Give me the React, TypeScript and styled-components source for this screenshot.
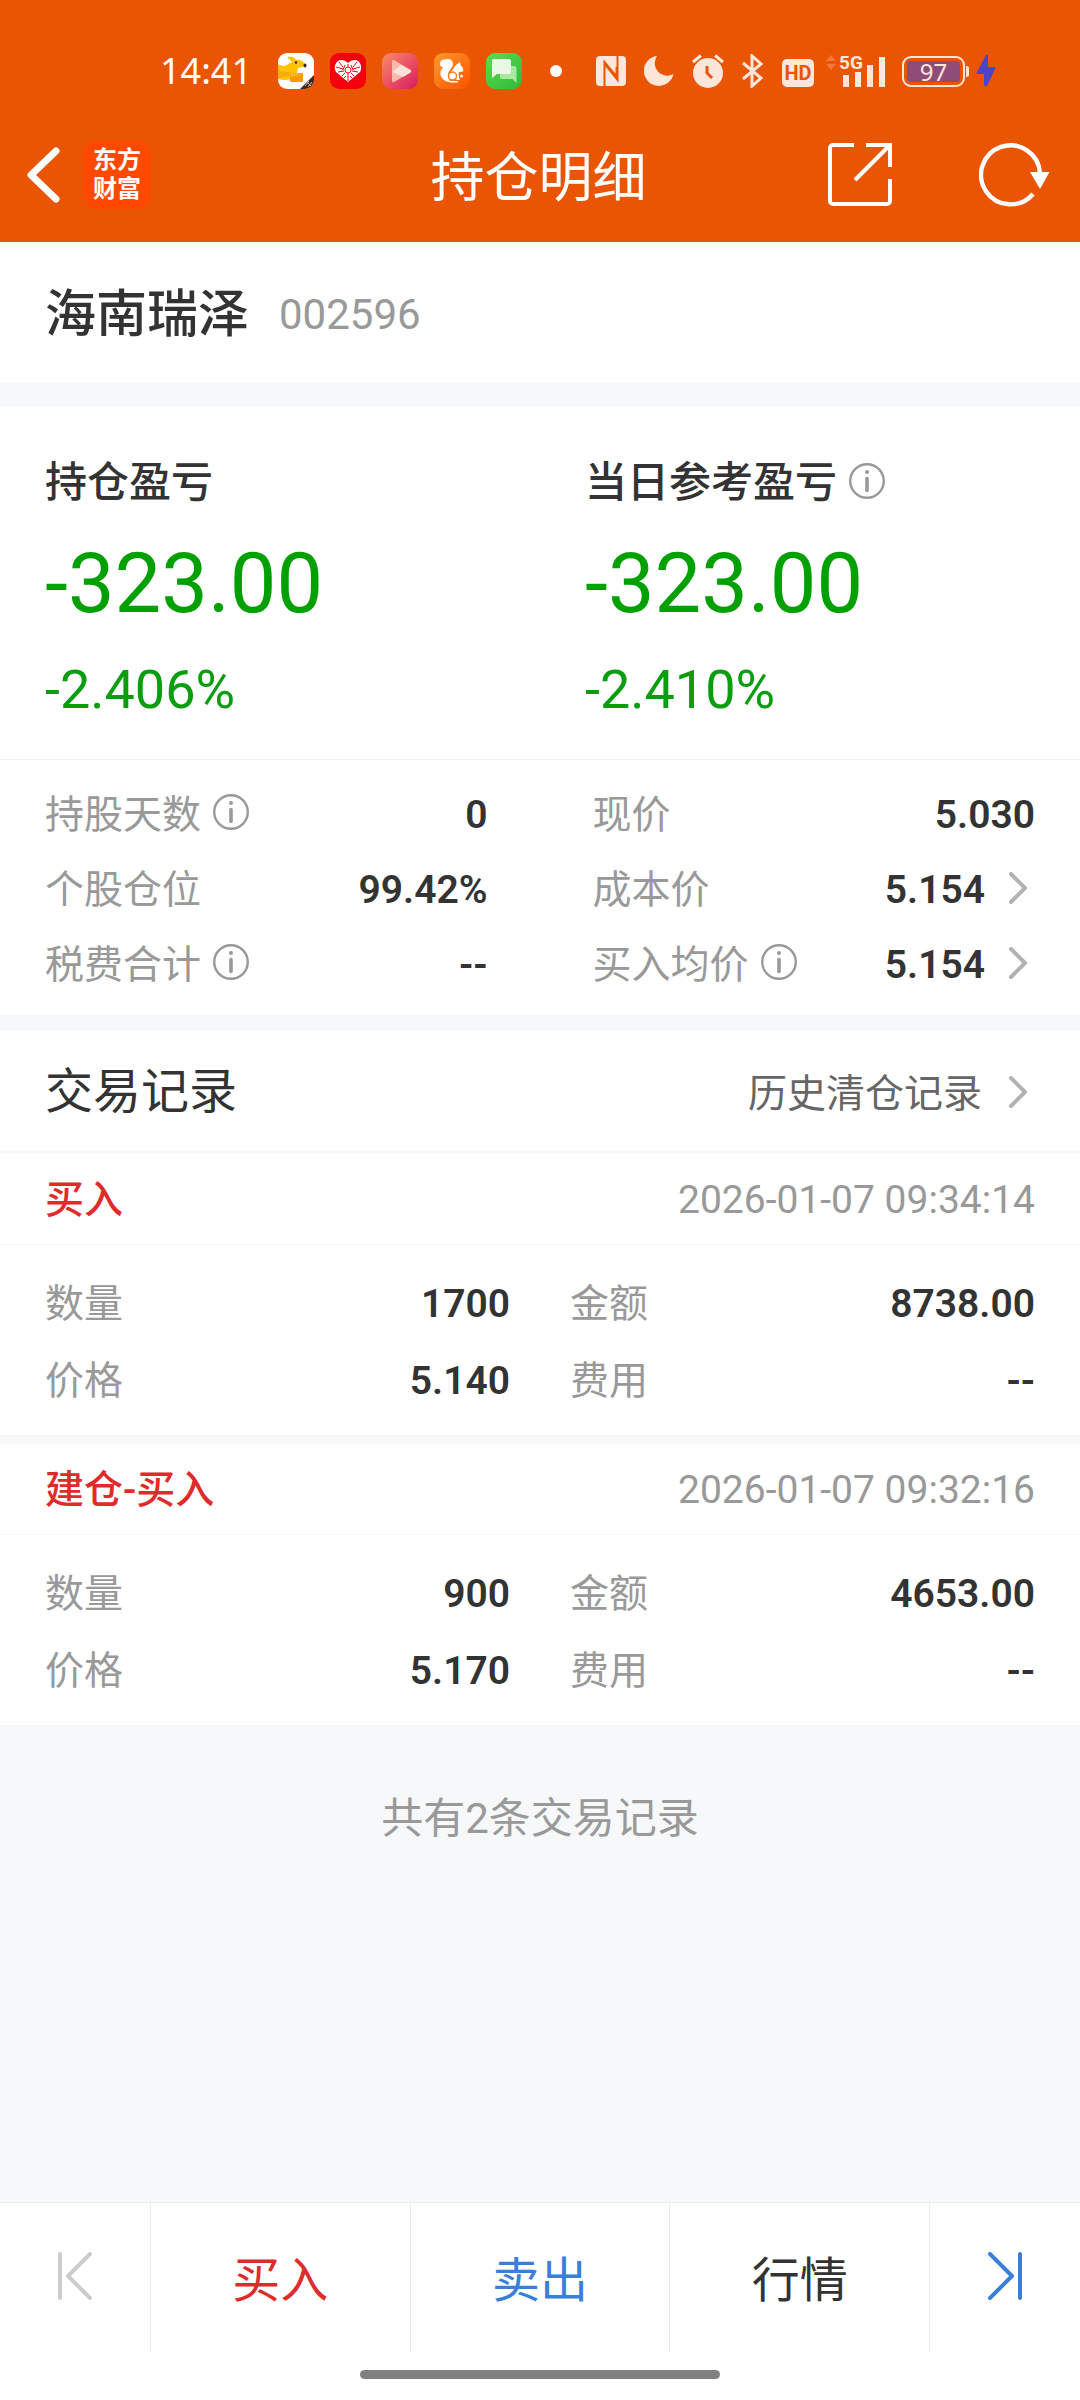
import React from "react";
import styled, { createGlobalStyle } from "styled-components";

const GlobalStyle = createGlobalStyle`
  * { box-sizing: border-box; }
  body {
    margin: 0;
    background: #f6f8fa;
    color: #333;
    font-family: Roboto, "Noto Sans CJK SC", sans-serif;
    font-size: 39px;
    line-height: 60px;
  }
  h1, h2, h3, p, dl, dt, dd { margin: 0; font-weight: 400; }
  button {
    border: 0;
    padding: 0;
    background: none;
    color: inherit;
    font: inherit;
    cursor: pointer;
  }
  a { color: inherit; text-decoration: none; }
  svg { display: block; flex: none; }
`;

const Page = styled.div`
  min-height: 100vh;
  display: flex;
  flex-direction: column;
`;

const Top = styled.header`
  background: #ea5504;
  color: #fff;
`;

const StatusBar = styled.div`
  display: flex;
  align-items: center;
  justify-content: space-between;
  height: 107px;
  padding: 35px 84px 0 160px;
`;

const StatusGroup = styled.div<{ $gap: number }>`
  display: flex;
  align-items: center;
  gap: ${(p) => p.$gap}px;
`;

const Clock = styled.time`
  margin-right: 10px;
  font-family: "Noto Sans", sans-serif;
  font-size: 36px;
  line-height: 36px;
`;

const Dot = styled.span`
  width: 12px;
  height: 12px;
  margin-left: 12px;
  border-radius: 50%;
  background: #fff;
`;

const HdBadge = styled.span`
  width: 32px;
  height: 28px;
  margin: 4px -6px 0 0;
  border-radius: 5px;
  background: #ffe6da;
  color: #ea5504;
  font-size: 20px;
  font-weight: 700;
  line-height: 28px;
  text-align: center;
`;

const Battery = styled.span`
  display: flex;
  align-items: center;
  gap: 1px;
  margin: 0 -11px 0 -2px;
  &::after {
    content: "";
    width: 3px;
    height: 11px;
    border-radius: 0 2px 2px 0;
    background: #ffe6da;
  }
`;

const BatteryCase = styled.span`
  width: 63px;
  height: 31px;
  padding: 3px;
  border: 2px solid #ffe6da;
  border-radius: 9px;
`;

const BatteryLevel = styled.span`
  display: block;
  border-radius: 4px;
  background: #8f4c78;
  color: #ffe6da;
  font-family: "Noto Sans", sans-serif;
  font-size: 24px;
  line-height: 21px;
  text-align: center;
`;

const NavBar = styled.div`
  display: grid;
  grid-template-columns: 1fr auto 1fr;
  align-items: center;
  height: 135px;
  padding: 0 30px 0 27px;
`;

const NavSide = styled.div<{ $end?: boolean }>`
  display: flex;
  align-items: center;
  justify-content: ${(p) => (p.$end ? "flex-end" : "flex-start")};
  gap: ${(p) => (p.$end ? 87 : 23)}px;
`;

const NavTitle = styled.h1`
  font-size: 54px;
  line-height: 72px;
  padding-top: 9px;
`;

const Brand = styled.a`
  width: 68px;
  height: 68px;
  padding: 5px 0;
  border-radius: 14px;
  background: #ff4800;
  font-size: 24px;
  font-weight: 700;
  line-height: 29px;
  text-align: center;
`;

const Main = styled.main`
  flex: 1;
`;

const Panel = styled.section<{ $after: number }>`
  margin-bottom: ${(p) => p.$after}px;
  background: #fff;
`;

const Stock = styled.div`
  display: flex;
  align-items: center;
  gap: 30px;
  height: 140px;
  padding: 6px 45px 0;
`;

const StockName = styled.h2`
  font-size: 51px;
  font-weight: 500;
`;

const StockCode = styled.span`
  color: #999;
  font-size: 42px;
`;

const ProfitRow = styled.div`
  display: grid;
  grid-template-columns: 1fr 1fr;
  border-bottom: 1px solid #f3f3f3;
`;

const Profit = styled.div`
  padding: 47px 45px 39px;
`;

const ProfitLabel = styled.h3`
  display: flex;
  align-items: center;
  gap: 12px;
  font-size: 42px;
  font-weight: 500;
`;

const ProfitAmount = styled.p`
  margin: 26px 0 31px;
  color: #00a000;
  font-size: 83px;
  line-height: 90px;
`;

const ProfitRate = styled.p`
  color: #0a9d10;
  font-size: 54px;
`;

const Facts = styled.dl<{ $record?: boolean }>`
  display: grid;
  grid-template-columns: 1fr 1fr;
  grid-auto-rows: ${(p) => (p.$record ? 77 : 75)}px;
  column-gap: ${(p) => (p.$record ? 60 : 105)}px;
  padding: ${(p) => (p.$record ? "20px 45px 16px" : "17px 45px 13px")};
`;

const Fact = styled.div`
  display: flex;
  align-items: center;
  justify-content: space-between;
`;

const FactLabel = styled.dt`
  display: flex;
  align-items: center;
  gap: 12px;
  color: #999;
`;

const FactValue = styled.dd`
  font-weight: 600;
`;

const InfoButton = styled.button`
  padding-bottom: 5px;
  color: #999;
`;

const MoreButton = styled.button`
  display: flex;
  align-items: center;
  gap: 24px;
  padding-right: 8px;
`;

const ListHead = styled.div`
  display: flex;
  align-items: center;
  justify-content: space-between;
  height: 120px;
  padding: 3px 45px 0;
`;

const ListTitle = styled.h2`
  font-size: 48px;
`;

const HistoryLink = styled.a`
  display: flex;
  align-items: center;
  gap: 27px;
  padding: 4px 8px 0 0;
  color: #666;
`;

const RecordHead = styled.div`
  display: flex;
  align-items: center;
  justify-content: space-between;
  height: 91px;
  padding: 2px 45px 0;
  border-bottom: 1px solid #f6f7f8;
`;

const RecordKind = styled.h3`
  color: #df2b2b;
  font-size: 39px;
  font-weight: 500;
`;

const RecordTime = styled.time`
  color: #999;
`;

const Total = styled.p`
  margin-top: 64px;
  color: #999;
  font-size: 42px;
  text-align: center;
`;

const Bottom = styled.footer`
  border-top: 1px solid #ebebeb;
  background: #fff;
`;

const TabBar = styled.nav`
  display: grid;
  grid-template-columns: 151px 1fr 1fr 1fr 150px;
  height: 149px;
`;

const Tab = styled.button<{ $color: string }>`
  display: flex;
  align-items: center;
  justify-content: center;
  border-right: 1px solid #ebebeb;
  padding-top: 6px;
  color: ${(p) => p.$color};
  font-size: 48px;
  &:last-child { border-right: 0; }
`;

const StepTab = styled(Tab)`
  padding: 0 0 4px;
`;

const HomeArea = styled.div`
  display: flex;
  justify-content: center;
  height: 48px;
  padding-top: 18px;
`;

const HomeBar = styled.span`
  width: 360px;
  height: 9px;
  border-radius: 5px;
  background: #808080;
`;

const InfoIcon = () => (
  <svg width="36" height="36" viewBox="0 0 36 36" fill="none" stroke="currentColor">
    <circle cx="18" cy="18" r="16.8" strokeWidth="2.4" />
    <circle cx="18" cy="9" r="2" fill="currentColor" stroke="none" />
    <path d="M18 15.5v12" strokeWidth="3.6" strokeLinecap="round" />
  </svg>
);

const Chevron = () => (
  <svg width="18" height="36" viewBox="0 0 18 36" fill="none">
    <path d="M2 2l14 14L2 30" stroke="#b2b2b2" strokeWidth="4" strokeLinecap="round" strokeLinejoin="round" />
  </svg>
);

const BackIcon = () => (
  <svg width="33" height="56" viewBox="0 0 33 56" fill="none">
    <path d="M29 4L4 28l25 24" stroke="#fff" strokeWidth="7" strokeLinecap="round" strokeLinejoin="round" />
  </svg>
);

const ShareIcon = () => (
  <svg width="64" height="64" viewBox="0 0 64 64" fill="none" stroke="#fff" strokeWidth="4">
    <path d="M26 2H5a3 3 0 0 0-3 3v53a3 3 0 0 0 3 3h54a3 3 0 0 0 3-3V36" />
    <path d="M38 2h24v22M61 3L27 37" />
  </svg>
);

const RefreshIcon = () => (
  <svg width="71" height="64" viewBox="0 0 71 64" fill="none">
    <path d="M61 30A29.5 29.5 0 1 0 54 51" stroke="#fff" strokeWidth="4.400" />
    <path d="M51 29h19.500L61 46z" fill="#fff" />
  </svg>
);

const KangarooApp = () => (
  <svg width="36" height="36" viewBox="0 0 36 36">
    <clipPath id="kangaroo"><rect width="36" height="36" rx="9" /></clipPath>
    <g clipPath="url(#kangaroo)">
      <rect width="36" height="36" fill="#fff" />
      <path d="M0 11c4 2 7 3 10 0l4-2-5-5c4-1 8 0 9 3 4-1 8 2 10 5 0 2-5 2-8 3-1 4 0 5-4 9-3 3-10 4-16 2z" fill="#fcc305" />
      <path d="M0 17c5 3 9 1 13 2l-2 4-11 2z" fill="#f5ae07" />
      <rect x="12" y="20" width="13" height="9" rx="1" fill="#fb9a00" />
      <path d="M12 20l13 1-12 3z" fill="#ffb72b" />
      <circle cx="18" cy="9.500" r="1.200" fill="#412619" />
      <ellipse cx="27" cy="12.500" rx="1.500" ry="2" fill="#412619" />
      <path d="M22 36L36 22v14z" fill="#43261b" />
      <path d="M27 33l4-5M30 34l4-5M29 29l4 4" stroke="#cdb8a8" strokeWidth="1" />
    </g>
  </svg>
);

const HeartApp = () => (
  <svg width="36" height="36" viewBox="0 0 36 36" fill="none">
    <rect width="36" height="36" rx="9" fill="#f5000c" />
    <path d="M18 29L6 19c-3-5 0-12 5-12 3 0 5 1 7 3 2-2 4-3 7-3 5 0 8 7 5 12z" fill="#fff" />
    <path d="M18 11v3M18 20v8M9 9l4 5M27 9l-4 5M6 14l7 2M30 14l-7 2M8 19l6-1M28 19l-6-1M12 23l3-3M24 23l-3-3M15 12l-2 5M21 12l2 5M14 25l2-2M22 25l-2-2" stroke="#f5000c" strokeWidth="1" />
    <circle cx="18" cy="17" r="3" stroke="#f5000c" strokeWidth="1" />
  </svg>
);

const VideoApp = () => (
  <svg width="36" height="36" viewBox="0 0 36 36">
    <linearGradient id="video" x1="0" y1="0" x2="1" y2="1">
      <stop stopColor="#fc8c66" />
      <stop offset="1" stopColor="#d81a62" />
    </linearGradient>
    <rect width="36" height="36" rx="9" fill="url(#video)" />
    <path d="M10 8.500c0-1.500 1-2 2-1.500l16 9.500c1.300.8 1.300 2.200 0 3L12 29c-1 .6-2 0-2-1.500z" fill="#fbb9ac" />
    <path d="M10 19l9-7 9.500 5c1 .8 1 2-.2 2.700L21 24z" fill="#fde0d8" />
  </svg>
);

const SquirrelApp = () => (
  <svg width="36" height="36" viewBox="0 0 36 36">
    <linearGradient id="squirrel" x1="0" y1="0" x2="1" y2="1">
      <stop stopColor="#ff9a2c" />
      <stop offset="1" stopColor="#ff5200" />
    </linearGradient>
    <rect width="36" height="36" rx="9" fill="url(#squirrel)" />
    <path d="M6 11c0-3 2-5 5-4.500 4-1.500 8 .5 8 4.500 0 4-5 6-5 11 0 3 1 5 3 7h-3C8 27 5 22 7 17c1-1.500 2-2 2-3-2 0-3-1-3-3z" fill="#fff" />
    <path d="M16 19c3-1 4-5 6-7l4-3 .5 3c2 2 3.500 4.500 2.500 6.500l-4 .5c-1 2 0 6 1 8h-3z" fill="#fff" />
    <circle cx="18.500" cy="23" r="4" fill="#fff" stroke="#ff7a18" strokeWidth="1.400" />
    <path d="M14 28h10v1.500H16z" fill="#fff" />
    <circle cx="27.500" cy="23" r="1.500" fill="#fff" />
  </svg>
);

const ChatApp = () => (
  <svg width="36" height="36" viewBox="0 0 36 36">
    <linearGradient id="chat" x1="0" y1="0" x2="1" y2="1">
      <stop stopColor="#5fdc4c" />
      <stop offset="1" stopColor="#2fb93a" />
    </linearGradient>
    <rect width="36" height="36" rx="9" fill="url(#chat)" />
    <path d="M14 13h14c1.500 0 2.500 1 2.500 2.500V30l-4-4H16c-1.500 0-2-1-2-2z" fill="#a8e8a0" />
    <path d="M6 8c0-1.500 1-2 2-2h15c1.500 0 2 1 2 2v11c0 1.500-1 2-2 2H11l-5 4z" fill="#e9f9e6" />
  </svg>
);

const NfcIcon = () => (
  <svg width="30" height="30" viewBox="0 0 30 30" fill="none">
    <rect width="30" height="30" rx="4" fill="#ffe6da" />
    <path d="M8.500 30V6l12 14.500V11M21.500 0v24L9.500 9" stroke="#ea5504" strokeWidth="2" />
  </svg>
);

const MoonIcon = () => (
  <svg width="30" height="30" viewBox="0 0 30 30">
    <path d="M13 0A15 15 0 1 0 29.500 18 12.500 12.500 0 0 1 13 0z" fill="#ffe6da" />
  </svg>
);

const AlarmIcon = () => (
  <svg width="32" height="34" viewBox="0 0 32 34" fill="none">
    <circle cx="16" cy="19" r="15" fill="#ffe6da" />
    <path d="M1 8l8-6.500M31 8l-8-6.500" stroke="#ffe6da" strokeWidth="3" />
    <path d="M15 12v7l5 5" stroke="#ea5504" strokeWidth="3" />
  </svg>
);

const BluetoothIcon = () => (
  <svg width="22" height="34" viewBox="0 0 22 34" fill="none">
    <path d="M1 9l18 15-9 8V2l9 8L1 25" stroke="#ffe6da" strokeWidth="3" />
  </svg>
);

const SignalIcon = () => (
  <svg width="60" height="44" viewBox="0 -5 60 44">
    <path d="M0 7l5-6 5 6zM0 10l5 6 5-6z" fill="#f4763a" />
    <path d="M17 21h6v12h-6zM29 18h6v15h-6zM41 11h6v22h-6zM53 3h6v30h-6z" fill="#ffe6da" />
    <text x="13" y="15" fill="#ffe6da" fontSize="19" fontWeight="700">5G</text>
  </svg>
);

const BoltIcon = () => (
  <svg width="20" height="32" viewBox="0 0 20 32">
    <path d="M10 0L0 19h8v12l3 0 9-19h-8V0z" fill="#4d44c8" />
  </svg>
);

const StepIcon = ({ flip }: { flip?: boolean }) => (
  <svg width="34" height="48" viewBox="0 0 34 48" fill="none" stroke="currentColor" strokeWidth="4" strokeLinecap="round" strokeLinejoin="round">
    <path d={flip ? "M32 2v44M2 2l22 22L2 46" : "M2 2v44M32 2L10 24l22 22"} />
  </svg>
);

type Item = { label: string; value: string; info?: boolean; more?: boolean };

const position: Item[] = [
  { label: "持股天数", value: "0", info: true },
  { label: "现价", value: "5.030" },
  { label: "个股仓位", value: "99.42%" },
  { label: "成本价", value: "5.154", more: true },
  { label: "税费合计", value: "--", info: true },
  { label: "买入均价", value: "5.154", info: true, more: true },
];

const profits = [
  { label: "持仓盈亏", amount: "-323.00", rate: "-2.406%", info: false },
  { label: "当日参考盈亏", amount: "-323.00", rate: "-2.410%", info: true },
];

const records = [
  {
    kind: "买入",
    time: "2026-01-07 09:34:14",
    after: 9,
    items: [
      { label: "数量", value: "1700" },
      { label: "金额", value: "8738.00" },
      { label: "价格", value: "5.140" },
      { label: "费用", value: "--" },
    ],
  },
  {
    kind: "建仓-买入",
    time: "2026-01-07 09:32:16",
    after: 0,
    items: [
      { label: "数量", value: "900" },
      { label: "金额", value: "4653.00" },
      { label: "价格", value: "5.170" },
      { label: "费用", value: "--" },
    ],
  },
];

const FactList = ({ items, record }: { items: Item[]; record?: boolean }) => (
  <Facts $record={record}>
    {items.map((item) => (
      <Fact key={item.label}>
        <FactLabel>
          {item.label}
          {item.info && (
            <InfoButton aria-label={`${item.label}说明`}>
              <InfoIcon />
            </InfoButton>
          )}
        </FactLabel>
        <FactValue>
          {item.more ? (
            <MoreButton>
              {item.value}
              <Chevron />
            </MoreButton>
          ) : (
            item.value
          )}
        </FactValue>
      </Fact>
    ))}
  </Facts>
);

export default function App() {
  return (
    <Page>
      <GlobalStyle />
      <Top>
        <StatusBar>
          <StatusGroup $gap={16}>
            <Clock>14:41</Clock>
            <KangarooApp />
            <HeartApp />
            <VideoApp />
            <SquirrelApp />
            <ChatApp />
            <Dot />
          </StatusGroup>
          <StatusGroup $gap={18}>
            <NfcIcon />
            <MoonIcon />
            <AlarmIcon />
            <BluetoothIcon />
            <HdBadge>HD</HdBadge>
            <SignalIcon />
            <Battery>
              <BatteryCase>
                <BatteryLevel>97</BatteryLevel>
              </BatteryCase>
            </Battery>
            <BoltIcon />
          </StatusGroup>
        </StatusBar>
        <NavBar>
          <NavSide>
            <button aria-label="返回">
              <BackIcon />
            </button>
            <Brand href="#home">
              东方
              <br />
              财富
            </Brand>
          </NavSide>
          <NavTitle>持仓明细</NavTitle>
          <NavSide $end>
            <button aria-label="分享">
              <ShareIcon />
            </button>
            <button aria-label="刷新">
              <RefreshIcon />
            </button>
          </NavSide>
        </NavBar>
      </Top>

      <Main>
        <Panel $after={24}>
          <Stock>
            <StockName>海南瑞泽</StockName>
            <StockCode>002596</StockCode>
          </Stock>
        </Panel>

        <Panel $after={15}>
          <ProfitRow>
            {profits.map((p) => (
              <Profit key={p.label}>
                <ProfitLabel>
                  {p.label}
                  {p.info && (
                    <InfoButton aria-label={`${p.label}说明`}>
                      <InfoIcon />
                    </InfoButton>
                  )}
                </ProfitLabel>
                <ProfitAmount>{p.amount}</ProfitAmount>
                <ProfitRate>{p.rate}</ProfitRate>
              </Profit>
            ))}
          </ProfitRow>
          <FactList items={position} />
        </Panel>

        <Panel $after={4}>
          <ListHead>
            <ListTitle>交易记录</ListTitle>
            <HistoryLink href="#history">
              历史清仓记录
              <Chevron />
            </HistoryLink>
          </ListHead>
        </Panel>

        {records.map((r) => (
          <Panel key={r.time} $after={r.after}>
            <RecordHead>
              <RecordKind>{r.kind}</RecordKind>
              <RecordTime>{r.time}</RecordTime>
            </RecordHead>
            <FactList items={r.items} record />
          </Panel>
        ))}

        <Total>共有2条交易记录</Total>
      </Main>

      <Bottom>
        <TabBar>
          <StepTab $color="#ccc" aria-label="上一只">
            <StepIcon />
          </StepTab>
          <Tab $color="#df2b2b">买入</Tab>
          <Tab $color="#3a80d8">卖出</Tab>
          <Tab $color="#333">行情</Tab>
          <StepTab $color="#3a80d8" aria-label="下一只">
            <StepIcon flip />
          </StepTab>
        </TabBar>
        <HomeArea>
          <HomeBar />
        </HomeArea>
      </Bottom>
    </Page>
  );
}
